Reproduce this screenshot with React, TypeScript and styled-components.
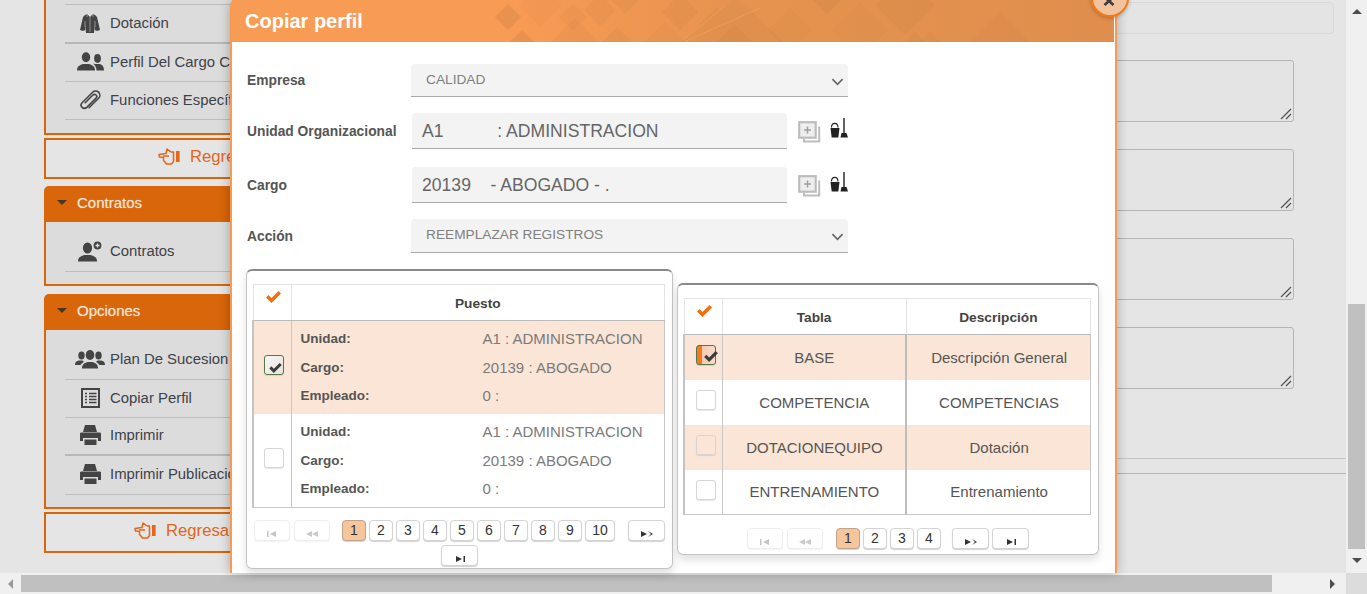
import React from "react";
import styled, { createGlobalStyle } from "styled-components";

const Global = createGlobalStyle`
  html, body { margin: 0; padding: 0; overflow: hidden; }
  body { font-family: "Liberation Sans", Arial, sans-serif; }
  * { box-sizing: border-box; }
`;

const Screen = styled.div`
  position: relative; width: 1367px; height: 594px; overflow: hidden;
  display: flex; flex-direction: column; background: #e5e5e5;
`;
const Upper = styled.div`display: flex; height: 573px; overflow: hidden;`;
const Page = styled.div`flex: 1; display: flex; min-width: 0; overflow: hidden;`;
const Sidebar = styled.aside`width: 290px; margin-left: 44px; flex-shrink: 0;`;
const PanelHead = styled.div`
  height: 36px; background: #d9660a; border-radius: 5px 5px 0 0; color: #f2e4d8;
  display: flex; align-items: center; padding: 0 0 3px 13px; gap: 10px; font-size: 15px;
  text-shadow: 0 0 1px rgba(255,255,255,.5);
`;
const Caret = styled.i`
  width: 0; height: 0; border-left: 5px solid transparent; border-right: 5px solid transparent;
  border-top: 5px solid #4a3422;
`;
const PanelBody = styled.div<{ $top: number; $bottom: number }>`
  background: #dcdcdc; border: 2px solid #d9660a; border-top: 0;
  padding: ${p => p.$top}px 0 ${p => p.$bottom}px 19px;
`;
const MenuList = styled.div<{ $ruled?: boolean }>`
  ${p => p.$ruled ? "border-top: 1px solid #bdbdbd;" : ""}
`;
const MenuRow = styled.div<{ $h?: number; $thick?: boolean }>`
  height: ${p => p.$h ?? 38}px; display: flex; align-items: center; white-space: nowrap; padding-bottom: 2px;
  border-bottom: ${p => p.$thick ? "2px solid #b8b8b8" : "1px solid #bdbdbd"};
  font-size: 14.9px; color: #3f4248;
`;
const MenuIcon = styled.span`
  width: 40px; margin-left: 5px; display: flex; justify-content: center; align-items: center; color: #444;
`;
const BackBox = styled.div<{ $left: number; $top: number; $bottom: number }>`
  height: 41px; margin: ${p => p.$top}px 0 ${p => p.$bottom}px; border: 2px solid #d9660a;
  background: #e5e5e5; display: flex; align-items: center; gap: 9px; padding: 0 0 3px ${p => p.$left}px;
  color: #e2661c; font-size: 16.7px; white-space: nowrap;
`;

const Main = styled.main`flex: 1; min-width: 0; padding: 2px 0 0 46px;`;
const TopField = styled.div`
  height: 32px; margin: 0 12px 26px 0; border: 1px solid #d9d9d9; border-radius: 4px; background: #e4e4e4;
`;
const Area = styled.div`
  position: relative; height: 62px; margin: 0 52px 27px 0; border: 1px solid #b5b5b5; border-radius: 3px;
  background: #e4e4e4;
`;
const Grip = styled.svg`position: absolute; right: 1px; bottom: 1px; color: #555;`;
const Rule = styled.div<{ $top: number; $color: string }>`
  margin-top: ${p => p.$top}px; border-top: 1px solid ${p => p.$color};
`;

const VBar = styled.div`
  width: 21px; background: #f0f0f0; display: flex; flex-direction: column; align-items: center;
  flex-shrink: 0; position: relative;
`;
const VArrow = styled.i<{ $down?: boolean }>`
  width: 0; height: 0; border-left: 5px solid transparent; border-right: 5px solid transparent;
  ${p => p.$down ? "border-top: 5px solid #4d4d4d; margin-top: 9px;" : "border-bottom: 5px solid #4d4d4d; margin-top: 9px;"}
`;
const VThumb = styled.div`width: 17px; height: 245px; margin-top: 290px; background: #c0c0c0;`;
const HBar = styled.div`height: 21px; background: #f0f0f0; display: flex; align-items: center;`;
const HArrow = styled.i<{ $right?: boolean }>`
  width: 0; height: 0; border-top: 5px solid transparent; border-bottom: 5px solid transparent;
  ${p => p.$right ? "border-left: 5px solid #4d4d4d; margin-left: 58px;" : "border-right: 5px solid #9a9a9a; margin: 0 8px;"}
`;
const HThumb = styled.div`width: 1251px; height: 17px; background: #c0c0c0;`;
const Corner = styled.div`width: 21px; height: 21px; background: #dcdcdc; margin-left: auto;`;

const Modal = styled.section`
  position: absolute; left: 230px; top: 0; width: 887px; height: 573px; background: #fff;
  border-left: 2px solid #f79a54; border-right: 2px solid #f79a54; border-radius: 6px 0 0 0;
  box-shadow: 0 0 12px rgba(0,0,0,.28);
`;
const ModalHead = styled.header`
  position: relative; height: 42px; width: 882px; overflow: hidden; display: flex; align-items: center;
  padding: 0 0 0 13px; color: #fff; font-size: 20px; font-weight: 700;
  background: linear-gradient(90deg, #f89b54 0, #f89b54 32%, #e6934f 58%, #e08e4d 100%);
`;
const HeadArt = styled.svg`position: absolute; inset: 0; width: 882px; height: 42px;`;
const Title = styled.span`position: relative;`;
const Close = styled.div`
  position: absolute; left: 859px; top: -21px; width: 38px; height: 38px; border-radius: 50%;
  background: #f1c29d; border: 2px solid #f47a18; color: #3c3c3c;
  display: flex; justify-content: center; align-items: flex-end; padding: 0 3px 9px 0;
  box-shadow: 0 1px 4px rgba(0,0,0,.25);
`;
const Form = styled.div`padding: 22px 0 0 15px;`;
const FormRow = styled.div<{ $gap: number }>`
  display: flex; align-items: center; margin-bottom: ${p => p.$gap}px;
`;
const Label = styled.label`width: 164px; flex-shrink: 0; font-size: 13.8px; font-weight: 700; color: #555;`;
const SelectBox = styled.div<{ $h: number }>`
  position: relative; width: 437px; height: ${p => p.$h}px; background: #f3f3f3; border-bottom: 1px solid #a9a9a9;
  border-radius: 4px 4px 0 0; display: flex; align-items: center; padding: 0 0 2px 15px;
  font-size: 13.7px; color: #808080;
`;
const Chevron = styled.span`position: absolute; right: 4px; top: 11px; color: #666; display: flex;`;
const InputBox = styled.div`
  width: 375px; height: 36px; margin-left: 1px; background: #f3f3f3; border-bottom: 1px solid #a9a9a9;
  border-radius: 4px 4px 0 0; display: flex; align-items: center; padding: 2px 0 0 10px;
  font-size: 17.6px; color: #666; white-space: pre;
`;
const ToolIcons = styled.div`display: flex; align-items: flex-start; margin: 0 0 0 11px; gap: 9px;`;
const ToolAdd = styled.span`display: block; margin-top: 1px; line-height: 0;`;
const ToolClean = styled.span`display: block; margin-top: -2px; line-height: 0;`;
const Panels = styled.div`display: flex; align-items: flex-start; margin: 0 0 0 -1px; gap: 4px;`;
const Card = styled.div<{ $w: number; $h: number; $top: number }>`
  width: ${p => p.$w}px; height: ${p => p.$h}px; margin-top: ${p => p.$top}px; padding: 13px 7px 0 5px;
  background: #fff; border: 1px solid #c4c4c4; border-top: 2px solid #8a8a8a; border-radius: 6px;
  box-shadow: 0 5px 8px rgba(0,0,0,.12);
`;
const Table = styled.table`
  width: 100%; border-collapse: collapse; table-layout: fixed; color: #555;
`;
const Th = styled.th<{ $w?: number }>`
  ${p => p.$w ? `width: ${p.$w}px;` : ""} height: 36px; padding: 1px 0 0; font-size: 13.7px; color: #444;
  border: 1px solid #e4e4e4; border-bottom: 1px solid #bbb; vertical-align: middle;
`;
const CheckHead = styled.span`display: block; height: 30px; padding: 3px 0 0 12px; color: #f26f0e; line-height: 0; text-align: left;`;
const Tr = styled.tr<{ $on?: boolean }>`background: ${p => p.$on ? "#fae5d6" : "#fff"};`;
const Td = styled.td<{ $thick?: boolean; $h?: number }>`
  padding: 0 0 0 1px; height: ${p => p.$h ?? 45}px; text-align: center; font-size: 15px; color: #555;
  border-left: ${p => p.$thick ? "2px solid #bdbdbd" : "1px solid #c8c8c8"};
  border-right: 1px solid #c8c8c8; border-bottom: 1px solid #c8c8c8;
  tr:not(:last-child) > & { border-bottom: 0; }
`;
const OuterTd = styled(Td)`border-left: 2px solid #c4c4c4;`;
const Info = styled.div`
  display: grid; grid-template-columns: 182px 1fr; padding: 4px 0 3px 8px; text-align: left;
  line-height: 28.5px; white-space: nowrap;
`;
const InfoKey = styled.span`font-size: 13.5px; font-weight: 700; color: #555;`;
const InfoVal = styled.span`font-size: 15px; color: #7b7b7b;`;
const Check = styled.span<{ $on?: boolean; $ghost?: boolean; $strip?: boolean; $ml: number }>`
  position: relative; display: block; width: 20px; height: 20px; margin: 0 0 4px ${p => p.$ml}px; border-radius: 3px;
  border: 1px solid ${p => p.$on ? "#55774a" : "#d6d6d6"};
  background: ${p => p.$on ? "linear-gradient(135deg,#f7f7f7,#e8e2dc)" : p.$ghost ? "transparent" : "#fff"};
  box-shadow: 0 1px 1px rgba(0,0,0,.1);
  ${p => p.$strip ? "background: linear-gradient(90deg,#f47a20 0,#f47a20 5px,#f5cbb0 5px,#f8dccb 100%);" : ""}
`;
const Tick = styled.svg<{ $strip?: boolean }>`
  position: absolute; left: ${p => p.$strip ? 7 : 4}px; top: ${p => p.$strip ? 5 : 7}px; color: #3c3c3c;
`;
const Pager = styled.div<{ $top: number }>`
  display: flex; flex-wrap: wrap; justify-content: center; row-gap: 4px; margin: ${p => p.$top}px -1px 0 1px;
`;
const PageBtn = styled.button<{ $on?: boolean; $wide?: boolean; $bold?: boolean }>`
  width: ${p => p.$wide ? 30 : 24}px; height: 21px; margin-right: 3px; padding: 0; border-radius: 4px;
  border: 1px solid ${p => p.$on ? "#bfa48f" : "#d4d4d4"}; background: ${p => p.$on ? "#f5c59c" : "#fff"};
  box-shadow: 0 1px 1px rgba(0,0,0,.18); font: 400 14px "Liberation Sans", Arial, sans-serif; color: #333;
  line-height: 17px; display: block;
`;
const NavBtn = styled.button<{ $off?: boolean; $ml?: number; $mr?: number }>`
  width: ${p => p.$off ? 36 : 37}px; height: 21px; padding: 6px 0 0; border-radius: 4px; background: #fff;
  margin-left: ${p => p.$ml ?? 0}px; margin-right: ${p => p.$mr ?? 0}px;
  border: 1px solid ${p => p.$off ? "#eee" : "#d4d4d4"};
  box-shadow: 0 1px 1px rgba(0,0,0,${p => p.$off ? ".05" : ".18"});
  color: ${p => p.$off ? "#c4c4c4" : "#333"}; line-height: 0;
`;
const BackSpacer = styled.div`height: 8px;`;

const Hand = () => (
  <svg width="23" height="18" viewBox="0 0 23 18" fill="none" stroke="#e2661c" strokeWidth="1.5" strokeLinejoin="round">
    <path d="M9 1l4 3h2.500v9.500l-2 2.500H8.500L7 14 5.500 12.500 5.500 9.500 1.500 9 1 6.500l7-1z" />
    <path d="M5 8h6" />
    <rect x="18" y="3" width="3.600" height="11" fill="#e2661c" stroke="none" />
  </svg>
);
const Coats = () => (
  <svg width="22" height="20" viewBox="0 0 22 20" fill="currentColor">
    <path d="M6 2l2-1 3 3 3-3 2 1 2 2 3 13-3 1-2-1v-5l-1 8H11 7l-1-8v5l-2 1-3-1L4 4z" />
    <path d="M8 1v3M11 4v15M14 1v3M6 8v6M16 8v6" stroke="#dcdcdc" strokeWidth=".5" fill="none" />
  </svg>
);
const Pair = () => (
  <svg width="27" height="19" viewBox="0 0 27 19" fill="currentColor">
    <ellipse cx="9" cy="5.200" rx="4.200" ry="5" />
    <path d="M0 18.500c0-4 2-5 6-6.500h6c4 1.500 6 2.500 6 6.500z" />
    <ellipse cx="20.500" cy="6.500" rx="3.400" ry="4.400" />
    <path d="M16 11.500l2 .5h5c2 1 4 2 4 6.500h-7.500c0-3-1.500-5.500-3.500-7z" />
  </svg>
);
const Clip = () => (
  <svg width="22" height="22" viewBox="0 0 24 24" fill="none" stroke="currentColor" strokeWidth="1.700" strokeLinecap="round" strokeLinejoin="round">
    <path d="M21.400 3.600a4.600 4.600 0 0 0-6.500 0L3.400 15a3.600 3.600 0 0 0 5.100 5.100L18.600 10a2.400 2.400 0 0 0-3.400-3.400L6.800 15" />
    <path d="M21.400 3.600a4.600 4.600 0 0 1 0 6.500L11 20.500" />
  </svg>
);
const UserPlus = () => (
  <svg width="24" height="21" viewBox="0 0 24 21" fill="currentColor">
    <ellipse cx="9.500" cy="7" rx="4.600" ry="5.600" />
    <path d="M0 20.500c0-4 2-5 6.500-6.500h6c4.500 1.500 6.500 2.500 6.500 6.500z" />
    <circle cx="19.500" cy="4.500" r="3.900" />
    <path d="M19.500 2.500v4M17.500 4.500h4" stroke="#dcdcdc" strokeWidth="1.300" />
  </svg>
);
const Trio = () => (
  <svg width="30" height="19" viewBox="0 0 30 19" fill="currentColor">
    <ellipse cx="15" cy="5" rx="4.300" ry="5" />
    <path d="M7 18.500c0-4 2-5.500 5.500-6.500h5c3.500 1 5.500 2.500 5.500 6.500z" />
    <ellipse cx="6.500" cy="5.500" rx="3.200" ry="4" />
    <path d="M0 15c0-3 1.500-4 4-4.500h3.500L9 12c-2 1-3 2-3.300 3z" />
    <ellipse cx="23.500" cy="5.500" rx="3.200" ry="4" />
    <path d="M30 15c0-3-1.500-4-4-4.500h-3.500L21 12c2 1 3 2 3.300 3z" />
  </svg>
);
const ListBox = () => (
  <svg width="19" height="20" viewBox="0 0 19 20" fill="none" stroke="currentColor">
    <rect x="1" y="1" width="17" height="18" strokeWidth="2" />
    <path d="M4 5.500h2M8 5.500h7.500M4 8.500h2M8 8.500h7.500M4 11.500h2M8 11.500h7.500M4 14.500h2M8 14.500h7.500" strokeWidth="1.500" />
  </svg>
);
const Printer = () => (
  <svg width="21" height="20" viewBox="0 0 21 20" fill="currentColor">
    <path d="M5 0h10l2 7H3z" />
    <path d="M0 9c0-1 .5-1.500 1.500-1.500h18c1 0 1.500.5 1.500 1.500v7h-3v-3H3v3H0z" />
    <path d="M4.500 14.500h12V20h-12z" />
  </svg>
);
const AddCopy = () => (
  <svg width="23" height="22" viewBox="0 0 23 22" fill="none" stroke="#bdbdbd">
    <rect x="1.200" y="1.200" width="16.500" height="15.500" fill="#eeeeee" strokeWidth="2.200" />
    <path d="M9.500 5.500v7M6 9h7" stroke="#a0a0a0" strokeWidth="1.500" />
    <path d="M21.200 5.500v15H6v-3" strokeWidth="2" />
  </svg>
);
const Clean = () => (
  <svg width="18" height="20" viewBox="0 0 18 20" fill="#222">
    <path d="M.5 10h9L8.300 19.500H1.700z" />
    <path d="M1.500 9.500c0-5.500 6.500-5.500 6.500 0" fill="none" stroke="#222" strokeWidth="1.100" />
    <path d="M13.300 0h1.400v15h-1.400z" />
    <path d="M10.500 19.500l1-4.500h5l1.500 4.500z" />
  </svg>
);
const Down = () => (
  <svg width="13" height="13" viewBox="0 0 14 14" fill="none" stroke="currentColor" strokeWidth="1.800">
    <path d="M1.500 4.500L7 10l5.500-5.500" />
  </svg>
);
const TickMark = ({ size = 14 }: { size?: number }) => (
  <svg width={size} height={size * 0.8} viewBox="0 0 15 12" fill="currentColor">
    <path d="M0 6.500L2.500 4 5.500 7 12.500 0 15 2.500 5.500 12z" />
  </svg>
);
const Nav = ({ kind }: { kind: "first" | "prev" | "next" | "last" }) => (
  <svg width="14" height="8" viewBox="0 0 14 8" fill="currentColor">
    {kind === "first" && <path d="M2 1h1.500v6H2zM11 1v6L5 4z" />}
    {kind === "prev" && <path d="M7 1v6L1 4zM13 1v6L7 4z" opacity=".9" />}
    {kind === "next" && <path d="M1 1v6l6-3zM8 1l5 3-5 3 3-3z" />}
    {kind === "last" && <path d="M3 1v6l6-3zM10.500 1H12v6h-1.500z" />}
  </svg>
);

const art: [number, number, number, number][] = [
  [508, 17, 13, .12], [522, 42, 12, .12], [540, 5, 22, .035], [573, 17, 14, .05], [575, 42, 24, .06],
  [617, 42, 15, .07], [600, 10, 16, .05], [665, 42, 20, .035], [625, 0, 14, .07], [680, 12, 18, .055],
  [717, 42, 35, .055], [750, 42, 33, .05], [735, 10, 14, .04], [790, 30, 22, .03], [827, 0, 14, .07],
  [860, 30, 28, .03], [905, 5, 30, .055], [930, 42, 10, .04], [915, 44, 12, .055], [1000, 42, 30, .035],
];
const HeaderArt = () => (
  <HeadArt viewBox="232 0 882 42" aria-hidden="true">
    {art.map(([x, y, r, o], i) => (
      <polygon key={i} points={`${x},${y - r} ${x + r},${y} ${x},${y + r} ${x - r},${y}`} fill={`rgba(130,85,45,${o})`} />
    ))}
    <path d="M683 40L725 6M686 41L760 8" stroke="rgba(255,210,170,.35)" strokeWidth=".6" />
  </HeadArt>
);

const CheckBox = ({ on, ghost, strip, ml }: { on?: boolean; ghost?: boolean; strip?: boolean; ml: number }) => (
  <Check $on={on} $ghost={ghost} $strip={strip} $ml={ml}>
    {on && (
      <Tick $strip={strip} width={strip ? 14 : 13} height={strip ? 11 : 10} viewBox="0 0 15 12" fill="currentColor">
        <path d="M0 6.500L2.500 4 5.500 7 12.500 0 15 2.500 5.500 12z" />
      </Tick>
    )}
  </Check>
);

const Pages = ({ count }: { count: number }) => (
  <>
    {Array.from({ length: count }, (_, i) => (
      <PageBtn key={i} $on={i === 0} $wide={i === 9}>{i + 1}</PageBtn>
    ))}
  </>
);

const Tools = () => (
  <ToolIcons>
    <ToolAdd><AddCopy /></ToolAdd>
    <ToolClean><Clean /></ToolClean>
  </ToolIcons>
);

export default function App() {
  return (
    <Screen>
      <Global />
      <Upper>
        <Page>
          <Sidebar>
            <PanelBody $top={4} $bottom={13}>
              <MenuList $ruled>
                <MenuRow $h={39} $thick><MenuIcon><Coats /></MenuIcon>Dotación</MenuRow>
                <MenuRow><MenuIcon><Pair /></MenuIcon>Perfil Del Cargo Completo</MenuRow>
                <MenuRow><MenuIcon><Clip /></MenuIcon>Funciones Específicas</MenuRow>
              </MenuList>
            </PanelBody>
            <BackBox $left={112} $top={3} $bottom={7}><Hand />Regresar</BackBox>
            <PanelHead><Caret />Contratos</PanelHead>
            <PanelBody $top={11} $bottom={12}>
              <MenuList>
                <MenuRow $h={39}><MenuIcon><UserPlus /></MenuIcon>Contratos</MenuRow>
              </MenuList>
            </PanelBody>
            <BackSpacer />
            <PanelHead><Caret />Opciones</PanelHead>
            <PanelBody $top={11} $bottom={12}>
              <MenuList>
                <MenuRow $h={39}><MenuIcon><Trio /></MenuIcon>Plan De Sucesion</MenuRow>
                <MenuRow><MenuIcon><ListBox /></MenuIcon>Copiar Perfil</MenuRow>
                <MenuRow $thick><MenuIcon><Printer /></MenuIcon>Imprimir</MenuRow>
                <MenuRow $h={39}><MenuIcon><Printer /></MenuIcon>Imprimir Publicación</MenuRow>
              </MenuList>
            </PanelBody>
            <BackBox $left={88} $top={3} $bottom={0}><Hand />Regresar</BackBox>
          </Sidebar>
          <Main>
            <TopField />
            {[0, 1, 2, 3].map(i => (
              <Area key={i}>
                <Grip width="12" height="12" viewBox="0 0 12 12" fill="none" stroke="currentColor" strokeWidth="1.300">
                  <path d="M1 11L11 1M6 11l5-5" />
                </Grip>
              </Area>
            ))}
            <Rule $top={69} $color="#c4c4c4" />
            <Rule $top={14} $color="#b5b5b5" />
          </Main>
        </Page>
        <VBar>
          <VArrow />
          <VThumb />
          <VArrow $down />
        </VBar>
      </Upper>
      <HBar>
        <HArrow />
        <HThumb />
        <HArrow $right />
        <Corner />
      </HBar>
      <Modal>
        <ModalHead>
          <HeaderArt />
          <Title>Copiar perfil</Title>
        </ModalHead>
        <Close>
          <svg width="12" height="9" viewBox="0 0 12 9" fill="none" stroke="currentColor" strokeWidth="2.600"><path d="M1.500 8L10.500 0M1.500 0L10.500 8" /></svg>
        </Close>
        <Form>
          <FormRow $gap={16}>
            <Label>Empresa</Label>
            <SelectBox $h={33}>CALIDAD<Chevron><Down /></Chevron></SelectBox>
          </FormRow>
          <FormRow $gap={18}>
            <Label>Unidad Organizacional</Label>
            <InputBox>{"A1           : ADMINISTRACION"}</InputBox>
            <Tools />
          </FormRow>
          <FormRow $gap={16}>
            <Label>Cargo</Label>
            <InputBox>{"20139    - ABOGADO - ."}</InputBox>
            <Tools />
          </FormRow>
          <FormRow $gap={0}>
            <Label>Acción</Label>
            <SelectBox $h={34}>REEMPLAZAR REGISTROS<Chevron><Down /></Chevron></SelectBox>
          </FormRow>
          <Panels>
            <Card $w={427} $h={300} $top={16}>
              <Table>
                <thead>
                  <tr>
                    <Th $w={38}><CheckHead><TickMark size={15} /></CheckHead></Th>
                    <Th>Puesto</Th>
                  </tr>
                </thead>
                <tbody>
                  {[0, 1].map(i => (
                    <Tr key={i} $on={i === 0}>
                      <OuterTd $h={i === 0 ? 93 : 94}><CheckBox on={i === 0} ml={9} /></OuterTd>
                      <Td $h={i === 0 ? 93 : 94}>
                        <Info>
                          <InfoKey>Unidad:</InfoKey><InfoVal>A1 : ADMINISTRACION</InfoVal>
                          <InfoKey>Cargo:</InfoKey><InfoVal>20139 : ABOGADO</InfoVal>
                          <InfoKey>Empleado:</InfoKey><InfoVal>0 :</InfoVal>
                        </Info>
                      </Td>
                    </Tr>
                  ))}
                </tbody>
              </Table>
              <Pager $top={12}>
                <NavBtn $off $mr={4}><Nav kind="first" /></NavBtn>
                <NavBtn $off $mr={12}><Nav kind="prev" /></NavBtn>
                <Pages count={10} />
                <NavBtn $ml={10}><Nav kind="next" /></NavBtn>
                <NavBtn><Nav kind="last" /></NavBtn>
              </Pager>
            </Card>
            <Card $w={422} $h={272} $top={30}>
              <Table>
                <thead>
                  <tr>
                    <Th $w={38}><CheckHead><TickMark size={15} /></CheckHead></Th>
                    <Th>Tabla</Th>
                    <Th>Descripción</Th>
                  </tr>
                </thead>
                <tbody>
                  <Tr $on><OuterTd><CheckBox on strip ml={10} /></OuterTd><Td>BASE</Td><Td $thick>Descripción General</Td></Tr>
                  <Tr><OuterTd><CheckBox ml={10} /></OuterTd><Td>COMPETENCIA</Td><Td $thick>COMPETENCIAS</Td></Tr>
                  <Tr $on><OuterTd><CheckBox ghost ml={10} /></OuterTd><Td>DOTACIONEQUIPO</Td><Td $thick>Dotación</Td></Tr>
                  <Tr><OuterTd><CheckBox ml={10} /></OuterTd><Td>ENTRENAMIENTO</Td><Td $thick>Entrenamiento</Td></Tr>
                </tbody>
              </Table>
              <Pager $top={13}>
                <NavBtn $off $mr={4}><Nav kind="first" /></NavBtn>
                <NavBtn $off $mr={13}><Nav kind="prev" /></NavBtn>
                <Pages count={4} />
                <NavBtn $ml={8} $mr={3}><Nav kind="next" /></NavBtn>
                <NavBtn><Nav kind="last" /></NavBtn>
              </Pager>
            </Card>
          </Panels>
        </Form>
      </Modal>
    </Screen>
  );
}
